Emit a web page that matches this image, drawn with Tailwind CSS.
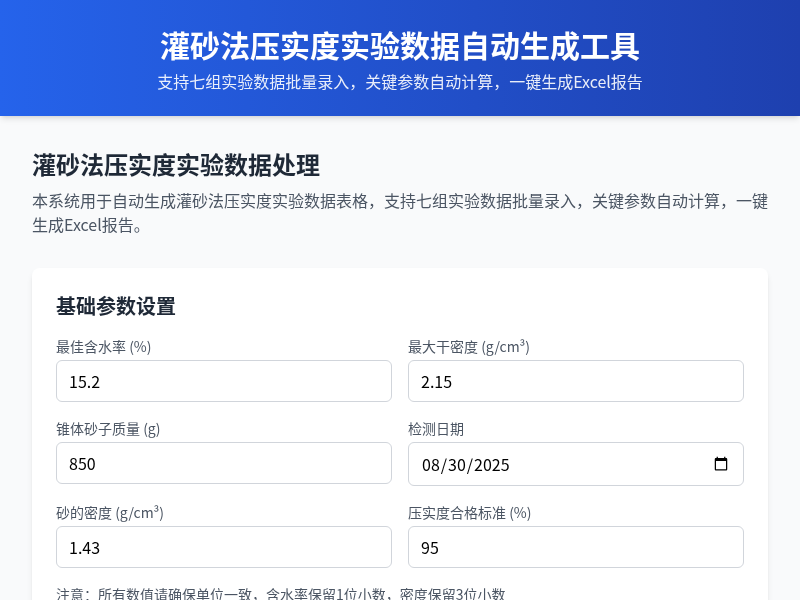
<!DOCTYPE html>
<html lang="zh-CN">
<head>
    <meta charset="UTF-8">
    <meta name="viewport" content="width=device-width, initial-scale=1.0">
    <title>灌砂法压实度实验数据自动生成工具</title>
    <script src="https://cdn.jsdelivr.net/npm/@tailwindcss/browser@4"></script>
</head>
<body class="bg-[#f9fafb] text-[#1f2937] font-['Noto_Sans_CJK_JP',sans-serif] h-[600px] overflow-hidden">
  <div class="[will-change:transform]">
    <header class="h-[116px] bg-gradient-to-r from-[#2563eb] to-[#1e40af] text-white text-center pt-6 shadow-md relative">
        <h1 class="text-3xl leading-[40px] font-bold">灌砂法压实度实验数据自动生成工具</h1>
        <p class="text-base leading-6 mt-[5px] text-white/90">支持七组实验数据批量录入，关键参数自动计算，一键生成Excel报告</p>
    </header>
    <main class="px-8 pt-8">
        <h2 class="text-2xl leading-8 font-bold">灌砂法压实度实验数据处理</h2>
        <p class="text-base leading-6 text-[#4b5563] mt-2">本系统用于自动生成灌砂法压实度实验数据表格，支持七组实验数据批量录入，关键参数自动计算，一键生成Excel报告。</p>
        <section class="bg-white rounded-lg shadow-md mt-8 p-6">
            <h3 class="text-xl leading-7 font-bold mb-4">基础参数设置</h3>
            <div class="grid grid-cols-2 gap-x-4 gap-y-4">
                <div>
                    <label class="block text-sm leading-5 text-[#4b5563] mb-1">最佳含水率 (%)</label>
                    <input type="text" value="15.2" class="w-full h-[42px] px-3 border border-[#d1d5db] rounded-md text-black">
                </div>
                <div>
                    <label class="block text-sm leading-5 text-[#4b5563] mb-1">最大干密度 (g/cm³)</label>
                    <input type="text" value="2.15" class="w-full h-[42px] px-3 border border-[#d1d5db] rounded-md text-black">
                </div>
                <div>
                    <label class="block text-sm leading-5 text-[#4b5563] mb-1">锥体砂子质量 (g)</label>
                    <input type="text" value="850" class="w-full h-[42px] px-3 border border-[#d1d5db] rounded-md text-black">
                </div>
                <div>
                    <label class="block text-sm leading-5 text-[#4b5563] mb-1">检测日期</label>
                    <input type="date" value="2025-08-30" class="w-full h-[44px] px-3 border border-[#d1d5db] rounded-md text-black">
                </div>
                <div>
                    <label class="block text-sm leading-5 text-[#4b5563] mb-1">砂的密度 (g/cm³)</label>
                    <input type="text" value="1.43" class="w-full h-[42px] px-3 border border-[#d1d5db] rounded-md text-black">
                </div>
                <div>
                    <label class="block text-sm leading-5 text-[#4b5563] mb-1">压实度合格标准 (%)</label>
                    <input type="text" value="95" class="w-full h-[42px] px-3 border border-[#d1d5db] rounded-md text-black">
                </div>
            </div>
            <p class="text-sm leading-5 text-[#4b5563] mt-4">注意：所有数值请确保单位一致，含水率保留1位小数，密度保留3位小数</p>
        </section>
    </main>
  </div>
</body>
</html>
